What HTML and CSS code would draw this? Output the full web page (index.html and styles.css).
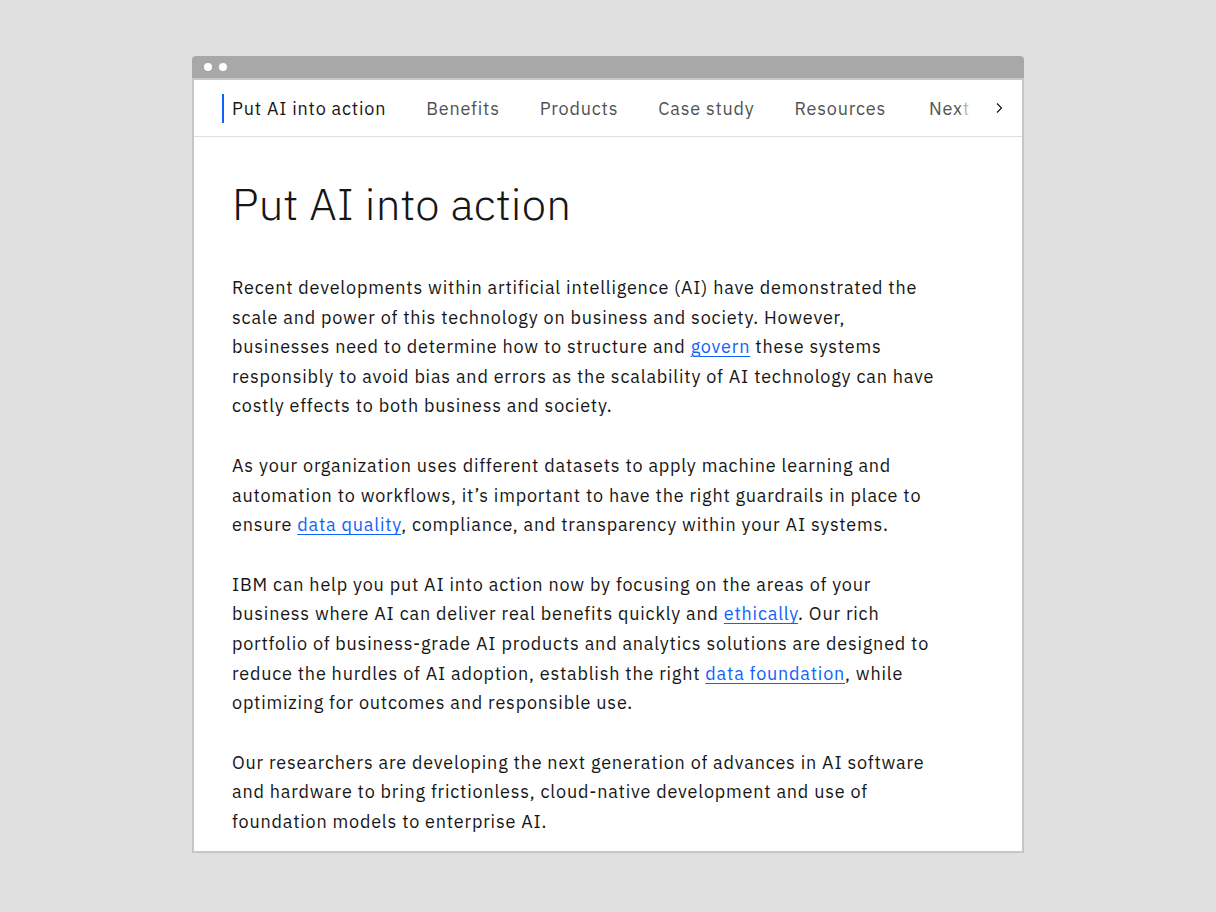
FILE: index.html
```html
<!DOCTYPE html>
<html lang="en">
<head>
<meta charset="utf-8">
<title>Put AI into action</title>
<link rel="stylesheet" href="styles.css">
</head>
<body>
<div class="window">
  <div class="titlebar"><span class="dot"></span><span class="dot"></span></div>
  <div class="frame">
    <nav class="tabs">
      <div class="tab-list">
        <a class="tab active">Put AI into action</a>
        <a class="tab">Benefits</a>
        <a class="tab">Products</a>
        <a class="tab">Case study</a>
        <a class="tab">Resources</a>
        <a class="tab">Next</a>
        <span class="fade"></span>
      </div>
      <button class="chevron" aria-label="Scroll right">
        <svg width="16" height="16" viewBox="0 0 16 16"><path d="M6 3.5 L10.5 8 L6 12.5" fill="none" stroke="#161616" stroke-width="1.2"/></svg>
      </button>
    </nav>
    <main class="content">
      <h1>Put AI into action</h1>
      <p>Recent developments within artificial intelligence (AI) have demonstrated the<br>scale and power of this technology on business and society. However,<br>businesses need to determine how to structure and <a href="#">govern</a> these systems<br>responsibly to avoid bias and errors as the scalability of AI technology can have<br>costly effects to both business and society.</p>
      <p>As your organization uses different datasets to apply machine learning and<br>automation to workflows, it’s important to have the right guardrails in place to<br>ensure <a href="#">data quality</a>, compliance, and transparency within your AI systems.</p>
      <p>IBM can help you put AI into action now by focusing on the areas of your<br>business where AI can deliver real benefits quickly and <a href="#">ethically</a>. Our rich<br>portfolio of business-grade AI products and analytics solutions are designed to<br>reduce the hurdles of AI adoption, establish the right <a href="#">data foundation</a>, while<br>optimizing for outcomes and responsible use.</p>
      <p>Our researchers are developing the next generation of advances in AI software<br>and hardware to bring frictionless, cloud-native development and use of<br>foundation models to enterprise AI.</p>
    </main>
  </div>
</div>
</body>
</html>
```
FILE: styles.css
```css
* { box-sizing: border-box; }
html, body { margin: 0; padding: 0; }
body {
  background: #e0e0e0;
  width: 1216px;
  height: 912px;
  display: flex;
  align-items: flex-start;
  justify-content: center;
  padding-top: 56px;
  font-family: "IBM Plex Sans", "Noto Sans", sans-serif;
  color: #161616;
}
.window { width: 832px; }
.titlebar {
  height: 22px;
  background: #a8a8a8;
  border-radius: 4px 4px 0 0;
  display: flex;
  align-items: center;
  gap: 7px;
  padding-left: 12px;
}
.dot { width: 8px; height: 8px; border-radius: 50%; background: #ffffff; }
.frame {
  background: #ffffff;
  border: 2px solid #c6c6c6;
  height: 775px;
  overflow: hidden;
}
.tabs {
  height: 57px;
  border-bottom: 1px solid #e0e0e0;
  display: flex;
  align-items: center;
}
.tab-list {
  position: relative;
  flex: 1;
  display: flex;
  align-items: center;
  gap: 40px;
  padding-left: 28px;
  overflow: hidden;
  white-space: nowrap;
  height: 100%;
}
.tab {
  font-size: 18px;
  letter-spacing: 0.8px;
  color: #525252;
  text-decoration: none;
  line-height: 29px;
}
.tab:last-of-type { margin-left: 3px; }
.tab.active {
  color: #161616;
  border-left: 2px solid #0f62fe;
  padding-left: 8px;
}
.fade {
  position: absolute;
  right: 0;
  top: 0;
  bottom: 0;
  width: 16px;
  background: linear-gradient(to right, rgba(255,255,255,0.2), rgba(255,255,255,0.9) 70%, #ffffff);
}
.chevron {
  width: 46px;
  height: 100%;
  border: none;
  background: #ffffff;
  display: flex;
  align-items: center;
  justify-content: center;
  padding: 0;
}
.content { padding: 39px 38px 0 38px; }
h1 {
  font-size: 44px;
  font-weight: 300;
  letter-spacing: 0.2px;
  line-height: 56px;
  margin: 0 0 41px 0;
}
p {
  font-size: 18px;
  letter-spacing: 0.8px;
  line-height: 29.6px;
  margin: 0 0 30px 0;
  white-space: nowrap;
}
p a { color: #0f62fe; text-decoration: underline; text-underline-offset: 3px; }
```
